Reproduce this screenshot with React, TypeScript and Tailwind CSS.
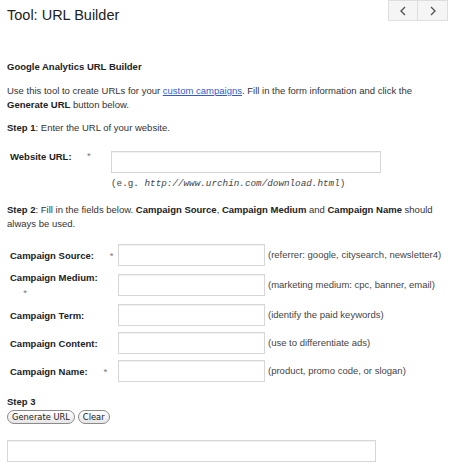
const fields = [
  { label: 'Campaign Source:', required: true, wrap: false, hint: '(referrer: google, citysearch, newsletter4)' },
  { label: 'Campaign Medium:', required: true, wrap: true, hint: '(marketing medium: cpc, banner, email)' },
  { label: 'Campaign Term:', required: false, wrap: false, hint: '(identify the paid keywords)' },
  { label: 'Campaign Content:', required: false, wrap: false, hint: '(use to differentiate ads)' },
  { label: 'Campaign Name:', required: true, wrap: false, hint: '(product, promo code, or slogan)' },
]

const NBSP = '\u00a0\u00a0\u00a0\u00a0\u00a0'

function TextBox({ className }: { className: string }) {
  return (
    <input
      type="text"
      className={`border border-[#d6d6d6] bg-white shadow-[inset_0_1px_1px_rgba(0,0,0,0.06)] outline-none ${className}`}
    />
  )
}

function PillButton({ children }: { children: string }) {
  return (
    <button className="h-[14px] rounded-full border border-[#8a8a8a] bg-gradient-to-b from-white to-[#e6e6e6] px-[4px] text-[8.3px] leading-[12px] text-[#222] font-['DejaVu_Sans',sans-serif]">
      {children}
    </button>
  )
}

export default function App() {
  return (
    <div className="h-[468px] w-[450px] overflow-hidden bg-white font-['Liberation_Sans',Arial,sans-serif] text-[9.5px] leading-[14px] text-[#333]">
      <div className="flex items-start justify-between">
        <h1 className="pl-[7px] pt-[6px] text-[14.5px] leading-[18px] text-[#222]">Tool: URL Builder</h1>
        <div className="mr-[2px] flex h-[21px] border border-[#dedede] bg-[#f5f5f5] text-[#555]">
          <button className="flex w-[29px] items-center justify-center border-r border-[#dedede]">
            <svg width="8" height="10" viewBox="0 0 8 10" fill="none" stroke="currentColor" strokeWidth="1.4">
              <path d="M6 1 L2 5 L6 9" />
            </svg>
          </button>
          <button className="flex w-[29px] items-center justify-center">
            <svg width="8" height="10" viewBox="0 0 8 10" fill="none" stroke="currentColor" strokeWidth="1.4">
              <path d="M2 1 L6 5 L2 9" />
            </svg>
          </button>
        </div>
      </div>

      <div className="px-[7px]">
        <h2 className="mt-[36px] font-bold text-[#222]">Google Analytics URL Builder</h2>
        <p className="mt-[10px]">
          Use this tool to create URLs for your{' '}
          <a className="text-[#2f5bd3] underline">custom campaigns</a>. Fill in the form information and click the{' '}
          <b className="text-[#222]">Generate URL</b> button below.
        </p>
        <p className="mt-[9px]">
          <b className="text-[#222]">Step 1</b>: Enter the URL of your website.
        </p>

        <div className="mt-[16px] flex items-start">
          <span className="w-[80px] pl-[3px] font-bold leading-[12px] text-[#222]">Website URL:</span>
          <span className="w-[24px] leading-[10px] text-[#777]">*</span>
          <TextBox className="h-[22px] w-[270px]" />
        </div>
        <p className="mt-[4px] pl-[104px] font-['Liberation_Mono',monospace] text-[9.3px] text-[#444]">
          (e.g. <i>http://www.urchin.com/download.html</i>)
        </p>

        <p className="mt-[12px]">
          <b className="text-[#222]">Step 2</b>: Fill in the fields below. <b className="text-[#222]">Campaign Source</b>,{' '}
          <b className="text-[#222]">Campaign Medium</b> and <b className="text-[#222]">Campaign Name</b> should always be
          used.
        </p>

        <div className="mt-[10px] flex flex-col">
          {fields.map((f) => (
            <div key={f.label} className="flex min-h-[28px] items-center py-[1px]">
              <span className="w-[111px] shrink-0 pl-[3px] font-bold leading-[15px] text-[#222]">
                {f.label}
                {f.required && (
                  <>
                    {f.wrap ? <br /> : ' '}
                    <span className="font-normal text-[#777]">{NBSP}*</span>
                  </>
                )}
              </span>
              <TextBox className="h-[22px] w-[147px] shrink-0" />
              <span className="ml-[3px] whitespace-nowrap text-[#444]">{f.hint}</span>
            </div>
          ))}
        </div>

        <p className="mt-[10px] font-bold text-[#222]">Step 3</p>
        <div className="mt-[1px] flex gap-[3px]">
          <PillButton>Generate URL</PillButton>
          <PillButton>Clear</PillButton>
        </div>
        <TextBox className="mt-[16px] h-[22px] w-[369px]" />
      </div>
    </div>
  )
}
